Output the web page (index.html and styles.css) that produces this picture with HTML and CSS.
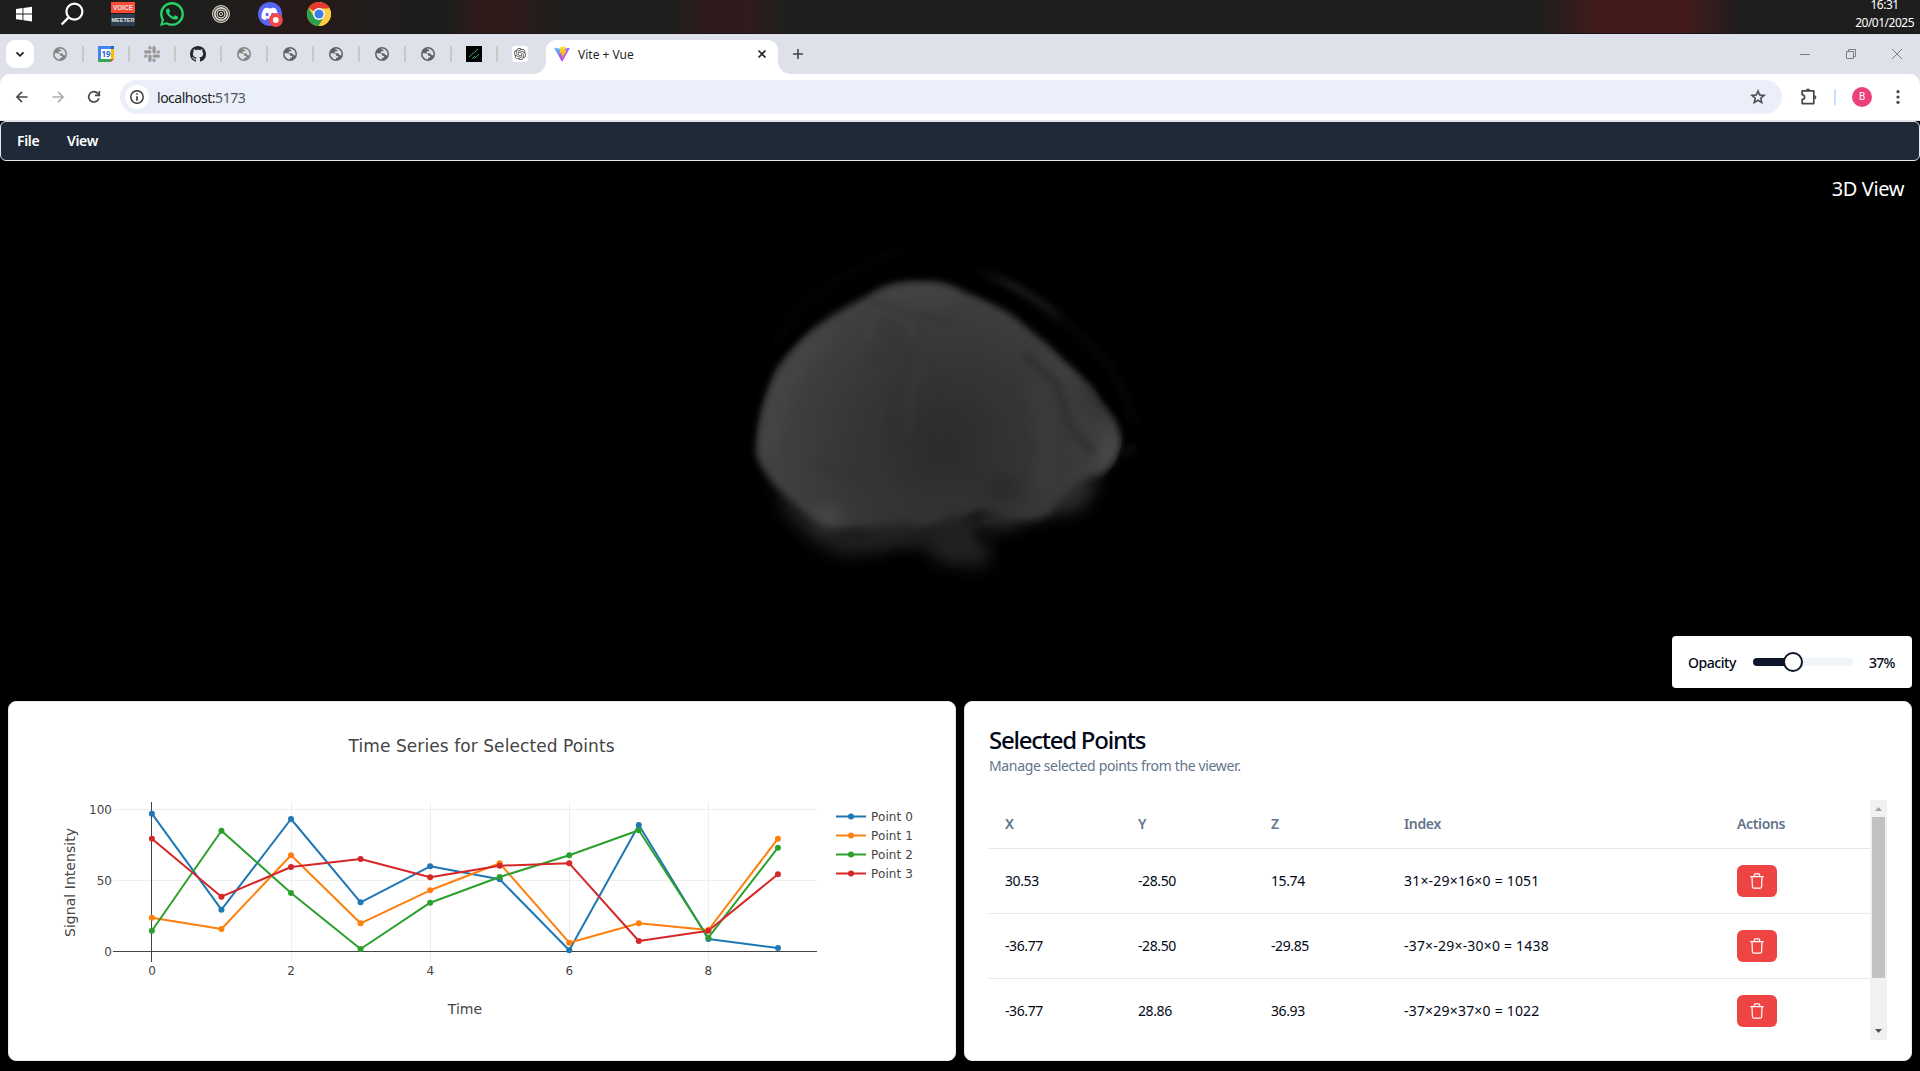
FILE: index.html
```html
<!DOCTYPE html>
<html lang="en">
<head>
<meta charset="utf-8">
<title>Vite + Vue</title>
<link rel="stylesheet" href="styles.css">
</head>
<body>
<svg width="0" height="0" class="defs">
  <symbol id="globe" viewBox="0 0 14 14"><circle cx="7" cy="7" r="7"/><path fill="#dee1e9" d="M1.600 6.300h3.200c1.500 0 2.200.8 2.200 1.900v.6h1.200c.6 0 1 .4 1 .9s-.4 1-1 1H7v1.800A5.600 5.600 0 0 1 1.600 6.300zM6.500 1.500a5.600 5.600 0 0 1 5.700 7.200c-.3-.5-.7-.8-1.300-.8h-.7c-.2-1.100-.8-1.700-1.800-1.700H6.700c-.6 0-1-.4-1-1s.4-1 1-1h.8c.6 0 1-.4 1-1V2.700H7c-.5 0-.7-.7-.5-1.200z"/></symbol>
  <symbol id="trash" viewBox="0 0 16 16"><path d="M1.700 3.700h12.600M5.300 3.500V1.700q0-.9.9-.9h3.600q.9 0 .9.900v1.800M3 4l.4 9.700q.1 1.500 1.500 1.500h6.200q1.400 0 1.500-1.500L13 4" fill="none" stroke="#fff" stroke-width="1.200" stroke-linecap="round"/></symbol>
</svg>

<header class="taskbar">
  <div class="task-icons">
    <svg viewBox="0 0 24 24"><path d="M3 6.900l6.500-.9v5.600H3zM10.400 5.900 19 4.700v6.900h-8.600zM3 12.500h6.500v5.600L3 17.200zM10.400 12.500H19v6.900l-8.600-1.200z" fill="#fff"/></svg>
    <svg viewBox="0 0 24 24"><circle cx="12.400" cy="9.600" r="8" fill="none" stroke="#fff" stroke-width="2.200"/><path d="M6.700 15.300-.4 22.500" stroke="#fff" stroke-width="2.400"/></svg>
    <div class="voicemeeter"><span>VOICE</span><span>MEETER</span></div>
    <svg viewBox="0 0 24 24"><path fill="#25d366" d="M17.472 14.382c-.297-.149-1.758-.867-2.030-.967-.273-.099-.471-.148-.670.150-.197.297-.767.966-.940 1.164-.173.199-.347.223-.644.075-.297-.150-1.255-.463-2.390-1.475-.883-.788-1.480-1.761-1.653-2.059-.173-.297-.018-.458.130-.606.134-.133.298-.347.446-.520.149-.174.198-.298.298-.497.099-.198.050-.371-.025-.520-.075-.149-.669-1.612-.916-2.207-.242-.579-.487-.500-.669-.510-.173-.008-.371-.010-.570-.010-.198 0-.520.074-.792.372-.272.297-1.040 1.016-1.040 2.479 0 1.462 1.065 2.875 1.213 3.074.149.198 2.096 3.200 5.077 4.487.709.306 1.262.489 1.694.625.712.227 1.360.195 1.871.118.571-.085 1.758-.719 2.006-1.413.248-.694.248-1.289.173-1.413-.074-.124-.272-.198-.570-.347M12 0C5.400 0 .1 5.300.1 11.900c0 2.100.5 4.100 1.600 5.900L0 24l6.300-1.700c1.700 1 3.700 1.500 5.700 1.500 6.600 0 11.900-5.300 11.900-11.900S18.600 0 12 0zm0 21.600c-1.800 0-3.500-.5-5-1.400l-3.900 1 1-3.700C3.100 15.900 2.500 13.900 2.500 11.900 2.500 6.600 6.800 2.400 12 2.400s9.500 4.300 9.500 9.500-4.200 9.700-9.500 9.700z"/></svg>
    <svg viewBox="0 0 24 24" fill="none" stroke="#ddd8cc"><circle cx="12" cy="12" r="8.400" stroke-width="1.100"/><circle cx="12" cy="12" r="6.200" stroke-width="1.700"/><circle cx="12" cy="12" r="3.900" stroke-width="1.200"/><circle cx="12" cy="12" r="1.600" stroke-width="1"/></svg>
    <svg viewBox="0 0 24 24" class="spill"><circle cx="12" cy="12" r="12" fill="#5865f2"/><path fill="#fff" transform="translate(3.500 3.500) scale(.7)" d="M20.317 4.370a19.790 19.790 0 0 0-4.885-1.515l-.6 1.250a18.270 18.270 0 0 0-5.487 0l-.63-1.250A19.740 19.740 0 0 0 3.677 4.370C.533 9.046-.320 13.580.099 18.057a19.900 19.900 0 0 0 5.993 3.030l1.226-1.994-1.872-.892.372-.292c3.928 1.793 8.180 1.793 12.062 0l.373.292-1.873.892 1.225 1.993a19.840 19.840 0 0 0 6.002-3.030c.500-5.177-.838-9.674-3.290-13.686zM8.020 15.330c-1.183 0-2.157-1.085-2.157-2.419S6.818 10.490 8.020 10.490s2.176 1.096 2.157 2.420c0 1.334-.956 2.420-2.157 2.420zm7.975 0c-1.183 0-2.157-1.085-2.157-2.419s.955-2.420 2.157-2.420 2.176 1.096 2.157 2.420c0 1.334-.946 2.420-2.157 2.420z"/><circle cx="17.800" cy="18" r="7" fill="#f0484d"/><circle cx="17.800" cy="18" r="2.900" fill="#fff"/></svg>
    <svg viewBox="0 0 24 24"><circle cx="12" cy="12" r="12" fill="#ffcd42"/><path d="M12 12 1.600 6A12 12 0 0 1 22.400 6z" fill="#e53a2e"/><path d="M12 12 7.300 14.900 1.600 6A12 12 0 0 0 11.500 24L17 15z" fill="#2ca14c"/><path d="M12 6.500h10.600A12 12 0 0 1 12 24l5-9z" fill="#ffcd42"/><circle cx="12" cy="12" r="5.900" fill="#fff"/><circle cx="12" cy="12" r="4.600" fill="#3b7de9"/></svg>
  </div>
  <div class="clock"><span>16:31</span><span>20/01/2025</span></div>
</header>

<nav class="tabstrip">
  <button class="tab-search"><svg viewBox="0 0 12 12" width="12" height="12"><path d="m2.500 4.300 3.500 3.500 3.500-3.500" fill="none" stroke="#1f1f1f" stroke-width="1.800"/></svg></button>
  <div class="pinned">
    <span class="pin soft"><svg><use href="#globe"/></svg></span>
    <span class="pin"><svg viewBox="0 0 16 16" class="full"><path d="M0 0h13v3H3v10H0z" fill="#4285f4"/><path d="M13 0h3v3h-3z" fill="#1967d2"/><path d="M13 3h3v10h-3z" fill="#fbbc04"/><path d="M0 13h13v3H1.200Q0 16 0 14.800z" fill="#34a853"/><path d="M13 13h3l-3 3z" fill="#ea4335"/><path d="M3 3h10v10H3z" fill="#fff"/><text x="8" y="10.900" text-anchor="middle" class="cal">19</text></svg></span>
    <span class="pin"><svg viewBox="0 0 24 24" class="full"><path fill="#999" d="M5.042 15.165a2.528 2.528 0 0 1-2.520 2.523A2.528 2.528 0 0 1 0 15.165a2.527 2.527 0 0 1 2.522-2.520h2.520v2.520zM6.313 15.165a2.527 2.527 0 0 1 2.521-2.520 2.527 2.527 0 0 1 2.521 2.520v6.313A2.528 2.528 0 0 1 8.834 24a2.528 2.528 0 0 1-2.521-2.522v-6.313zM8.834 5.042a2.528 2.528 0 0 1-2.521-2.520A2.528 2.528 0 0 1 8.834 0a2.528 2.528 0 0 1 2.521 2.522v2.520H8.834zM8.834 6.313a2.528 2.528 0 0 1 2.521 2.521 2.528 2.528 0 0 1-2.521 2.521H2.522A2.528 2.528 0 0 1 0 8.834a2.528 2.528 0 0 1 2.522-2.521h6.312zM18.956 8.834a2.528 2.528 0 0 1 2.522-2.521A2.528 2.528 0 0 1 24 8.834a2.528 2.528 0 0 1-2.522 2.521h-2.522V8.834zM17.688 8.834a2.528 2.528 0 0 1-2.523 2.521 2.527 2.527 0 0 1-2.520-2.521V2.522A2.527 2.527 0 0 1 15.165 0a2.528 2.528 0 0 1 2.523 2.522v6.312zM15.165 18.956a2.528 2.528 0 0 1 2.523 2.522A2.528 2.528 0 0 1 15.165 24a2.527 2.527 0 0 1-2.520-2.522v-2.522h2.520zM15.165 17.688a2.527 2.527 0 0 1-2.520-2.523 2.526 2.526 0 0 1 2.520-2.520h6.313A2.527 2.527 0 0 1 24 15.165a2.528 2.528 0 0 1-2.522 2.523h-6.313z"/></svg></span>
    <span class="pin"><svg viewBox="0 0 16 16" class="full"><path fill="#24292f" d="M8 0C3.580 0 0 3.580 0 8c0 3.540 2.290 6.530 5.470 7.590.4.070.55-.17.55-.38 0-.19-.01-.82-.01-1.490-2.010.37-2.530-.49-2.690-.94-.09-.23-.48-.94-.82-1.130-.28-.15-.68-.52-.01-.53.63-.01 1.080.58 1.230.82.72 1.210 1.870.87 2.330.66.070-.52.280-.87.510-1.070-1.780-.2-3.640-.89-3.640-3.950 0-.87.310-1.590.820-2.150-.08-.2-.36-1.020.080-2.120 0 0 .670-.21 2.200.820.640-.18 1.320-.27 2-.27s1.360.09 2 .27c1.530-1.040 2.200-.82 2.200-.82.440 1.100.160 1.920.080 2.120.510.560.820 1.270.820 2.150 0 3.070-1.870 3.750-3.650 3.950.290.250.540.730.540 1.480 0 1.070-.01 1.930-.01 2.200 0 .210.150.460.550.380A8.010 8.010 0 0 0 16 8c0-4.420-3.580-8-8-8z"/></svg></span>
    <span class="pin soft"><svg><use href="#globe"/></svg></span>
    <span class="pin"><svg><use href="#globe"/></svg></span>
    <span class="pin"><svg><use href="#globe"/></svg></span>
    <span class="pin"><svg><use href="#globe"/></svg></span>
    <span class="pin"><svg><use href="#globe"/></svg></span>
    <span class="pin"><svg viewBox="0 0 16 16" class="full"><path d="M0 0h16v16H0z" fill="#000"/><path d="m3 11 9-8M6 13l3-3M8.500 12.500l4.500-4.500" stroke="#2fa57a" fill="none"/></svg></span>
    <span class="pin"><svg viewBox="0 0 32 32" class="full"><rect width="32" height="32" rx="6" fill="#fff"/><path transform="translate(4 4)" fill="#444" d="M22.282 9.821a5.985 5.985 0 0 0-.516-4.910 6.046 6.046 0 0 0-6.510-2.900A6.065 6.065 0 0 0 4.981 4.180a5.985 5.985 0 0 0-3.998 2.900 6.046 6.046 0 0 0 .743 7.097 5.980 5.980 0 0 0 .510 4.911 6.051 6.051 0 0 0 6.515 2.900A5.985 5.985 0 0 0 13.260 24a6.056 6.056 0 0 0 5.772-4.206 5.990 5.990 0 0 0 3.997-2.900 6.056 6.056 0 0 0-.747-7.073zM13.260 22.430a4.476 4.476 0 0 1-2.876-1.040l.141-.081 4.779-2.758a.795.795 0 0 0 .392-.681v-6.737l2.020 1.168a.071.071 0 0 1 .038.052v5.583a4.504 4.504 0 0 1-4.494 4.494zM3.600 18.304a4.470 4.470 0 0 1-.535-3.014l.142.085 4.783 2.759a.771.771 0 0 0 .780 0l5.843-3.369v2.332a.080.080 0 0 1-.033.062L9.740 19.950a4.500 4.500 0 0 1-6.140-1.646zM2.340 7.896a4.485 4.485 0 0 1 2.366-1.973V11.600a.766.766 0 0 0 .388.677l5.815 3.354-2.020 1.168a.076.076 0 0 1-.071 0l-4.830-2.786A4.504 4.504 0 0 1 2.340 7.872zm16.597 3.855-5.833-3.387L15.119 7.200a.076.076 0 0 1 .071 0l4.830 2.791a4.494 4.494 0 0 1-.676 8.105v-5.678a.790.790 0 0 0-.407-.667zm2.010-3.023-.141-.085-4.774-2.782a.776.776 0 0 0-.785 0L9.409 9.230V6.897a.066.066 0 0 1 .028-.061l4.830-2.787a4.500 4.500 0 0 1 6.680 4.660zm-12.640 4.135-2.020-1.164a.080.080 0 0 1-.038-.057V6.075a4.500 4.500 0 0 1 7.375-3.453l-.142.080L8.704 5.460a.795.795 0 0 0-.393.681zm1.097-2.365 2.602-1.500 2.607 1.500v2.999l-2.597 1.500-2.607-1.500z"/></svg></span>
  </div>
  <div class="active-tab">
    <svg width="16" height="16" viewBox="0 0 410 404"><defs><linearGradient id="va" x1="6" y1="33" x2="235" y2="344" gradientUnits="userSpaceOnUse"><stop stop-color="#41d1ff"/><stop offset="1" stop-color="#bd34fe"/></linearGradient><linearGradient id="vb" x1="194" y1="9" x2="236" y2="293" gradientUnits="userSpaceOnUse"><stop stop-color="#ffea83"/><stop offset=".08" stop-color="#ffdd35"/><stop offset="1" stop-color="#ffa800"/></linearGradient></defs><path d="M399.600 59.500 215.600 388.500c-3.800 6.800-13.500 6.800-17.400 0L10.600 59.600c-4.200-7.500 2.200-16.500 10.600-15l184.100 32.900c1.200.2 2.400.2 3.500 0l180.300-32.900c8.400-1.500 14.800 7.500 10.500 14.900z" fill="url(#va)"/><path d="M293 1.600 156.800 28.300a5 5 0 0 0-4 4.600l-8.400 141.400c-.2 3.300 2.900 5.900 6.100 5.200l37.900-8.800c3.500-.8 6.700 2.400 6 5.900l-11.300 55.100c-.8 3.700 2.800 6.900 6.400 5.800l23.400-7.100c3.600-1.100 7.200 2.100 6.500 5.800l-17.900 86.600c-1.100 5.400 6.100 8.400 9.100 3.700L325.800 111c1.900-3.700-1.300-7.900-5.400-7.100l-39.200 7.600c-3.700.7-6.800-2.700-5.800-6.300L299 7.700c1-3.600-2.200-7-6-6.100z" fill="url(#vb)"/></svg>
    <span class="tab-title">Vite + Vue</span>
    <svg width="10" height="10" viewBox="0 0 10 10" class="tab-close"><path d="m1.500 1.500 7 7m0-7-7 7" stroke="#1f1f1f" stroke-width="1.600"/></svg>
  </div>
  <svg class="new-tab" width="12" height="12" viewBox="0 0 12 12"><path d="M6 1v10M1 6h10" stroke="#444746" stroke-width="1.600"/></svg>
  <div class="window-controls">
    <svg viewBox="0 0 12 12"><path d="M1 6.500h10"/></svg>
    <svg viewBox="0 0 12 12"><path d="M1.500 3.500h7v7h-7zM3.500 3.500v-2h7v7h-2"/></svg>
    <svg viewBox="0 0 12 12"><path d="m1 1 10 10m0-10L1 11"/></svg>
  </div>
</nav>

<div class="toolbar-wrap"><div class="toolbar">
  <div class="nav-icons">
    <svg viewBox="0 0 16 16"><path d="M13.500 8H3.200M8 2.900 2.900 8 8 13.100" stroke="#444746"/></svg>
    <svg viewBox="0 0 16 16"><path d="M2.500 8h10.300M8 2.900 13.100 8 8 13.100" stroke="#adb0b3"/></svg>
    <svg viewBox="0 0 16 16"><path d="M12.900 9.200A5.200 5.200 0 1 1 11.800 4.400l1.300 1.300" stroke="#444746"/><path d="M13.400 2v4.400H9" stroke="#444746"/></svg>
  </div>
  <div class="omnibox">
    <span class="site-info"><svg width="14" height="14" viewBox="0 0 14 14"><circle cx="7" cy="7" r="6.200" fill="none" stroke="#303134" stroke-width="1.400"/><path d="M6.200 3.300h1.600v1.500H6.200zM6.200 6.200h1.600v4.500H6.200z" fill="#303134"/></svg></span>
    <span class="url">localhost:<span>5173</span></span>
    <svg class="star" width="18" height="18" viewBox="0 0 24 24"><path fill="#444746" stroke="#444746" stroke-width=".5" d="m22 9.240-7.190-.62L12 2 9.190 8.630 2 9.240l5.460 4.730L5.820 21 12 17.270 18.180 21l-1.630-7.030L22 9.240zM12 15.400l-3.760 2.270 1-4.280-3.320-2.880 4.380-.38L12 6.100l1.710 4.040 4.380.38-3.320 2.880 1 4.280L12 15.400z"/></svg>
  </div>
  <svg class="puzzle" width="18" height="18" viewBox="0 0 18 18"><path d="M2.200 2.800h11.600v12.800H2.200v-4c3.200-.7 3.200-4.200 0-4.900z" fill="none" stroke="#444746" stroke-width="1.700" stroke-linejoin="round"/><path d="M6 2.500a2 2 0 0 1 4 0M14.400 7.300a2 2 0 0 1 0 4" fill="#444746"/></svg>
  <span class="sep"></span>
  <span class="avatar">B</span>
  <svg class="dots" width="4" height="14" viewBox="0 0 4 14" fill="#444746"><circle cx="2" cy="1.700" r="1.600"/><circle cx="2" cy="7" r="1.600"/><circle cx="2" cy="12.300" r="1.600"/></svg>
</div></div>

<main class="app">
  <nav class="menubar"><span class="m-file">File</span><span>View</span></nav>

  <section class="viewer">
    <svg class="volume" width="440" height="400" viewBox="0 0 1320 1200" color-interpolation-filters="sRGB">
      <defs>
        <filter id="b10" x="-20%" y="-20%" width="140%" height="140%"><feGaussianBlur stdDeviation="11"/></filter>
        <filter id="b25" x="-60%" y="-60%" width="220%" height="220%"><feGaussianBlur stdDeviation="24"/></filter>
        <filter id="b45" x="-60%" y="-60%" width="220%" height="220%"><feGaussianBlur stdDeviation="42"/></filter>
        <radialGradient id="tissue" gradientUnits="userSpaceOnUse" cx="680" cy="700" r="600"><stop stop-color="#2e2e2e"/><stop offset=".45" stop-color="#353535"/><stop offset=".85" stop-color="#404040"/><stop offset="1" stop-color="#424242"/></radialGradient>
        <linearGradient id="rim" gradientUnits="userSpaceOnUse" x1="760" y1="140" x2="1060" y2="330"><stop stop-color="#000"/><stop offset=".35" stop-color="#191919"/><stop offset=".7" stop-color="#161616"/><stop offset="1" stop-color="#050505"/></linearGradient>
        <clipPath id="hull"><path d="M105 690C110 600 130 530 165 450 200 400 260 330 300 305 350 270 400 245 430 230 480 195 520 180 600 180 680 182 700 195 740 215 800 240 860 265 900 300 960 350 1000 385 1040 425 1100 475 1130 510 1150 550 1190 590 1205 620 1205 665 1200 720 1170 750 1140 780L1090 880 950 905 840 960 820 1070H350L200 900 105 740z"/></clipPath>
      </defs>
      <g filter="url(#b25)">
        <path d="M150 750 200 890 280 965 360 1005 450 1005 520 960 590 970 660 1030 790 1045 815 1000 770 900 600 800z" fill="#1e1e1e"/>
        <path d="M980 780 1140 740 1110 840 1070 875 990 885 880 920 800 940 760 880z" fill="#2a2a2a"/>
      </g>
      <path filter="url(#b10)" fill="url(#tissue)" d="M108 690C112 600 132 530 167 452 200 402 262 335 305 308 350 275 400 250 435 232 480 200 520 185 600 184 680 184 700 198 740 218 800 243 860 268 898 303 960 353 1000 388 1038 428 1098 478 1125 512 1148 555 1185 595 1200 620 1202 665 1196 715 1168 745 1138 765 1090 770 1060 800 1010 850 990 890 960 895 920 898 870 900 840 880 790 870 750 880 730 900 680 905 600 925 500 930 420 920 350 930 290 915 235 860 180 810 110 750 108 690z"/>
      <path d="M690 890 720 1000M590 940 460 960" stroke="#232323" stroke-width="70" filter="url(#b25)" fill="none" opacity=".8"/>
      <g clip-path="url(#hull)">
        <g filter="url(#b25)" fill="none">
          <path d="M140 700C150 560 210 420 330 340" stroke="#4a4a4a" stroke-width="50" opacity=".5"/>
          <ellipse cx="320" cy="895" rx="36" ry="30" fill="#525252" opacity=".7"/>
          <path d="M510 225 690 230" stroke="#484848" stroke-width="40" opacity=".6"/>
          <path d="M1145 750 1185 650" stroke="#505050" stroke-width="45" opacity=".7"/>
          <path d="M960 400 1050 490" stroke="#464646" stroke-width="30" opacity=".6"/>
          <ellipse cx="520" cy="340" rx="50" ry="50" fill="#343434" opacity=".5"/>
          <path d="M1090 500 1160 590" stroke="#2b2b2b" stroke-width="40" opacity=".65"/>
          <ellipse cx="850" cy="810" rx="60" ry="45" fill="#272727" opacity=".6"/>
          <path d="M950 500Q1000 680 960 820" stroke="#404040" stroke-width="55" opacity=".5"/>
        </g>
        <g filter="url(#b10)" fill="none">
          <path d="M450 245 560 285 700 300" stroke="#313131" stroke-width="14" opacity=".5"/>
          <path d="M440 360 460 270 560 290 580 350" stroke="#444" stroke-width="20" opacity=".45"/>
          <path d="M910 400 1010 490 1050 620 1120 700" stroke="#292929" stroke-width="20" opacity=".65"/>
          <path d="M560 650 575 500 620 430" stroke="#3c3c3c" stroke-width="22" opacity=".5"/>
          <path d="M520 640 530 460M440 420 580 410" stroke="#303030" stroke-width="16" opacity=".4"/>
          <path d="M300 730 430 780" stroke="#333" stroke-width="25" opacity=".5"/>
        </g>
        <ellipse cx="660" cy="650" rx="100" ry="110" fill="#292929" opacity=".3" filter="url(#b45)"/>
      </g>
      <ellipse cx="800" cy="945" rx="40" ry="24" fill="#0a0a0a" opacity=".6" filter="url(#b10)"/>
      <g filter="url(#b10)" fill="none" stroke-linecap="round">
        <path d="M760 150Q900 190 1040 310" stroke="url(#rim)" stroke-width="26"/>
        <path d="M1040 310Q1190 420 1240 600" stroke="#050505" stroke-width="30"/>
        <path d="M170 370Q230 250 370 170T530 100" stroke="#040404" stroke-width="26"/>
        <path d="M1215 700 1240 685" stroke="#161616" stroke-width="15"/>
      </g>
    </svg>
    <span class="view-label">3D View</span>
    <div class="opacity">
      <span class="o-label">Opacity</span>
      <div class="slider"><div class="range"></div><div class="thumb"></div></div>
      <span class="o-value">37%</span>
    </div>
  </section>

  <section class="cards">
    <article class="card">
      <svg class="chart" viewBox="9 702 946 358" width="946" height="358">
        <text class="c-title" x="348.500" y="752" textLength="266">Time Series for Selected Points</text>
        <g stroke="#eee"><path d="M291.500 802v160M430.500 802v160M569.500 802v160M708.500 802v160M113 809.500h704M113 880.500h704"/></g>
        <path d="M151.500 802v160M113 951.500h704" stroke="#444"/>
        <g fill="none" stroke-width="2" stroke-linejoin="round" id="series"></g>
        <g class="tick" text-anchor="end"><text x="112" y="814">100</text><text x="112" y="885">50</text><text x="112" y="956">0</text></g>
        <g class="tick" text-anchor="middle"><text x="152" y="975">0</text><text x="291" y="975">2</text><text x="430.300" y="975">4</text><text x="569.300" y="975">6</text><text x="708.300" y="975">8</text></g>
        <text class="axis" x="465" y="1014" text-anchor="middle">Time</text>
        <text class="axis" transform="translate(75 937) rotate(-90)" textLength="109">Signal Intensity</text>
        <g class="tick" id="legend"></g>
      </svg>
    </article>

    <article class="card points">
      <h2>Selected Points</h2>
      <p>Manage selected points from the viewer.</p>
      <div class="scroller">
        <table>
          <thead><tr><th class="c">X</th><th class="c">Y</th><th class="c">Z</th><th class="idx">Index</th><th>Actions</th></tr></thead>
          <tbody>
            <tr><td>30.53</td><td>-28.50</td><td>15.74</td><td class="wide">31×-29×16×0 = 1051</td><td><button class="del"><svg><use href="#trash"/></svg></button></td></tr>
            <tr><td>-36.77</td><td>-28.50</td><td>-29.85</td><td class="wide">-37×-29×-30×0 = 1438</td><td><button class="del"><svg><use href="#trash"/></svg></button></td></tr>
            <tr><td>-36.77</td><td>28.86</td><td>36.93</td><td class="wide">-37×29×37×0 = 1022</td><td><button class="del"><svg><use href="#trash"/></svg></button></td></tr>
          </tbody>
        </table>
        <div class="scrollbar">
          <svg width="17" height="17" viewBox="0 0 17 17"><path d="m5 11 3.500-4 3.500 4z" fill="#a3a3a3"/></svg>
          <div class="bar"></div>
          <svg width="17" height="17" viewBox="0 0 17 17"><path d="m5 6 3.500 4L12 6z" fill="#505050"/></svg>
        </div>
      </div>
    </article>
  </section>
</main>
<script src="chart.js"></script>
</body>
</html>
```
FILE: styles.css
```css
* { box-sizing: border-box; }
body { margin: 0; width: 1920px; height: 1071px; overflow: hidden; background: #000; font-family: "Noto Sans", "Open Sans", sans-serif; font-size: 14px; display: flex; flex-direction: column; }
button { border: 0; padding: 0; display: flex; align-items: center; justify-content: center; }
svg { flex: none; }
.defs { position: absolute; }

.taskbar { height: 34px; flex: none; display: flex; justify-content: space-between; background: linear-gradient(90deg, #1e1e1d 0, #1e1e1d 220px, #271919 290px, #1f1d1c 400px, #1f1d1c 450px, #2f1a1a 480px, #2f1a1a 510px, #1e1e1d 560px, #1e1e1d 670px, #2f1b1b 705px, #2f1b1b 750px, #1f1f1d 785px, #1e1e1d 1540px, #431b1b 1600px, #431b1b 1685px, #1f1d1d 1740px, #1e1e1e 1920px); border-bottom: 1px solid #17131a; }
.task-icons { display: flex; gap: 25px; padding: 2px 0 0 13px; }
.task-icons svg { width: 24px; height: 24px; overflow: visible; }
.voicemeeter { width: 24px; height: 24px; display: grid; grid-template-rows: 11px 12px; gap: 1px; font: bold 6.500px/11px "Liberation Sans", sans-serif; color: #e4e4e4; text-align: center; background: #1e1e1e; overflow: hidden; }
.voicemeeter span:first-child { background: #fb4a35; }
.voicemeeter span:last-child { background: #2d3e50; font-size: 5.500px; line-height: 12px; }
.clock { color: #fff; font-size: 12px; line-height: 18px; display: flex; flex-direction: column; align-items: center; margin: -4px 6px 0 0; letter-spacing: -.5px; height: 36px; }

.tabstrip { height: 40px; flex: none; background: #dee1e9; display: flex; align-items: center; padding-left: 6px; }
.tab-search { width: 28px; height: 28px; border-radius: 9px; background: #fff; }
.pinned { display: flex; padding-left: 3px; }
.pin { width: 46px; height: 16px; display: flex; align-items: center; justify-content: center; fill: #5f6368; position: relative; }
.pin svg { width: 14px; height: 14px; }
.pin .full { width: 16px; height: 16px; }
.pin.soft { fill: #858585; }
.pin:not(:last-child)::after { content: ""; position: absolute; right: -1px; top: 0; width: 2px; height: 16px; background: #c9c8c5; }
.cal { font: bold 8px "Open Sans", sans-serif; fill: #1967d2; }
.active-tab { width: 232px; height: 34px; margin-top: 6px; margin-left: 3px; background: #fff; border-radius: 10px 10px 0 0; display: flex; align-items: center; padding: 0 11px 6px 8px; position: relative; }
.active-tab::before, .active-tab::after { content: ""; position: absolute; bottom: 0; width: 12px; height: 12px; }
.active-tab::before { left: -12px; background: radial-gradient(circle at 0 0, transparent 11.500px, #fff 12px); }
.active-tab::after { right: -12px; background: radial-gradient(circle at 100% 0, transparent 11.500px, #fff 12px); }
.tab-title { margin-left: 8px; font-size: 12px; color: #1f1f1f; letter-spacing: 0; flex: 1; }
.new-tab { margin-left: 14px; }
.window-controls { margin-left: auto; display: flex; gap: 34px; padding-right: 17px; }
.window-controls svg { width: 12px; height: 12px; fill: none; stroke: #7d7f83; }

.toolbar-wrap { background: #dee1e9; height: 47px; flex: none; }
.toolbar { height: 47px; background: #fff; border-radius: 10px 10px 0 0; border-bottom: 1px solid #dfe1e5; display: flex; align-items: center; padding-left: 14px; }
.nav-icons { display: flex; gap: 20px; width: 106px; }
.nav-icons svg { width: 16px; height: 16px; fill: none; stroke-width: 1.600; }
.omnibox { width: 1662px; height: 34px; border-radius: 17px; background: #ebeff9; display: flex; align-items: center; padding: 0 15px 0 5px; }
.site-info { width: 24px; height: 24px; border-radius: 50%; background: #fff; display: flex; align-items: center; justify-content: center; }
.url { margin-left: 8px; flex: 1; color: #1f1f1f; letter-spacing: -.48px; }
.url span { color: #50545a; }
.puzzle { margin-left: 18px; }
.sep { width: 2px; height: 16px; background: #cbdefb; margin-left: 16px; }
.avatar { width: 20px; height: 20px; border-radius: 50%; background: #ec407a; color: #fff; font: 10px/20px Roboto, sans-serif; text-align: center; margin-left: 16px; }
.dots { margin-left: 24px; }

.app { height: 950px; display: flex; flex-direction: column; background: #000; }
.menubar { height: 40px; flex: none; background: #1f2937; border: 1px solid #e2e8f0; border-radius: 6px; display: flex; align-items: center; padding: 0 0 1px 16px; color: #fff; font-weight: 600; letter-spacing: -.35px; }
.m-file { width: 50px; }
.viewer { height: 540px; flex: none; position: relative; }
.volume { position: absolute; left: 720px; top: 59px; }
.view-label { position: absolute; right: 16px; top: 14px; color: #fff; font-size: 20px; line-height: 28px; letter-spacing: -.4px; }
.opacity { position: absolute; right: 8px; top: 475px; width: 240px; height: 52px; background: #fff; border-radius: 4px; padding: 0 16px; display: flex; align-items: center; justify-content: space-between; color: #020817; font-weight: 500; }
.o-label { width: 49px; letter-spacing: -.45px; }
.o-value { width: 27px; letter-spacing: -.7px; }
.slider { width: 100px; height: 8px; border-radius: 4px; background: #f1f5f9; position: relative; }
.range { width: 40%; height: 8px; border-radius: 4px 0 0 4px; background: #0f172a; }
.thumb { position: absolute; left: 30px; top: -6px; width: 20px; height: 20px; border-radius: 50%; border: 2px solid #0f172a; background: #fff; }

.cards { display: flex; gap: 8px; padding: 0 8px; }
.card { width: 948px; height: 360px; background: #fff; border: 1px solid #e2e8f0; border-radius: 8px; overflow: hidden; }
.chart { display: block; }
.chart text { font-family: "DejaVu Sans", Verdana, sans-serif; fill: #444; }
.c-title { font-size: 17px; }
.tick { font-size: 12px; }
.axis { font-size: 14px; }
.points { padding: 24px; color: #020817; }
.points h2 { margin: 0; font: 500 24px/28px "Noto Sans", sans-serif; letter-spacing: -1.250px; }
.points p { margin: 2px 0 0; line-height: 20px; color: #64748b; letter-spacing: -.35px; }
.scroller { margin-top: 24px; height: 240px; display: flex; overflow: hidden; }
table { width: 881px; table-layout: fixed; border-collapse: collapse; align-self: flex-start; }
th { height: 48px; padding: 0 16px; text-align: left; color: #64748b; font-weight: 600; letter-spacing: -.35px; border-bottom: 1px solid #e2e8f0; }
.c { width: 133px; }
.idx { width: 333px; }
td { height: 65px; padding: 0 16px; letter-spacing: -.4px; border-bottom: 1px solid #e2e8f0; }
.wide { letter-spacing: .2px; }
.del { width: 40px; height: 32px; border-radius: 6px; background: #ef4444; }
.del svg { width: 16px; height: 16px; }
.scrollbar { width: 17px; height: 240px; background: #f1f1f1; display: flex; flex-direction: column; }
.bar { width: 13px; height: 161px; margin: 0 2px 45px; background: #c1c1c1; flex: none; }
```
FILE: chart.js
```js
const NS = "http://www.w3.org/2000/svg";
const el = (parent, name, attrs, text) => {
  const node = document.createElementNS(NS, name);
  for (const key in attrs) node.setAttribute(key, attrs[key]);
  if (text) node.textContent = text;
  parent.appendChild(node);
};
const series = [
  ["#1f77b4", [813.7, 909.7, 819, 902.3, 866.3, 879.3, 950.3, 825, 939, 948]],
  ["#ff7f0e", [917.7, 929, 855.3, 923.3, 890.3, 863.3, 942.7, 923.3, 930, 838.7]],
  ["#2ca02c", [930.7, 830.7, 893, 949, 902.7, 877, 855.3, 830.3, 937.7, 847.7]],
  ["#d62728", [838.7, 896.7, 867, 859, 877.3, 865.7, 863.3, 941, 930.7, 874.3]]
];
const plot = document.getElementById("series");
const legend = document.getElementById("legend");
const x = i => 151.9 + i * 69.56;
series.forEach(([color, ys], n) => {
  el(plot, "polyline", { points: ys.map((y, i) => x(i) + "," + y).join(" "), stroke: color });
  const ly = 816.5 + n * 19;
  el(legend, "path", { d: `M836 ${ly}h30`, stroke: color, "stroke-width": 2 });
  el(legend, "circle", { cx: 851, cy: ly, r: 3, fill: color });
  el(legend, "text", { x: 871, y: ly + 4.5, textLength: 42 }, "Point " + n);
});
series.forEach(([color, ys]) => ys.forEach((y, i) => el(plot, "circle", { cx: x(i), cy: y, r: 3, fill: color, stroke: "none" })));
```
